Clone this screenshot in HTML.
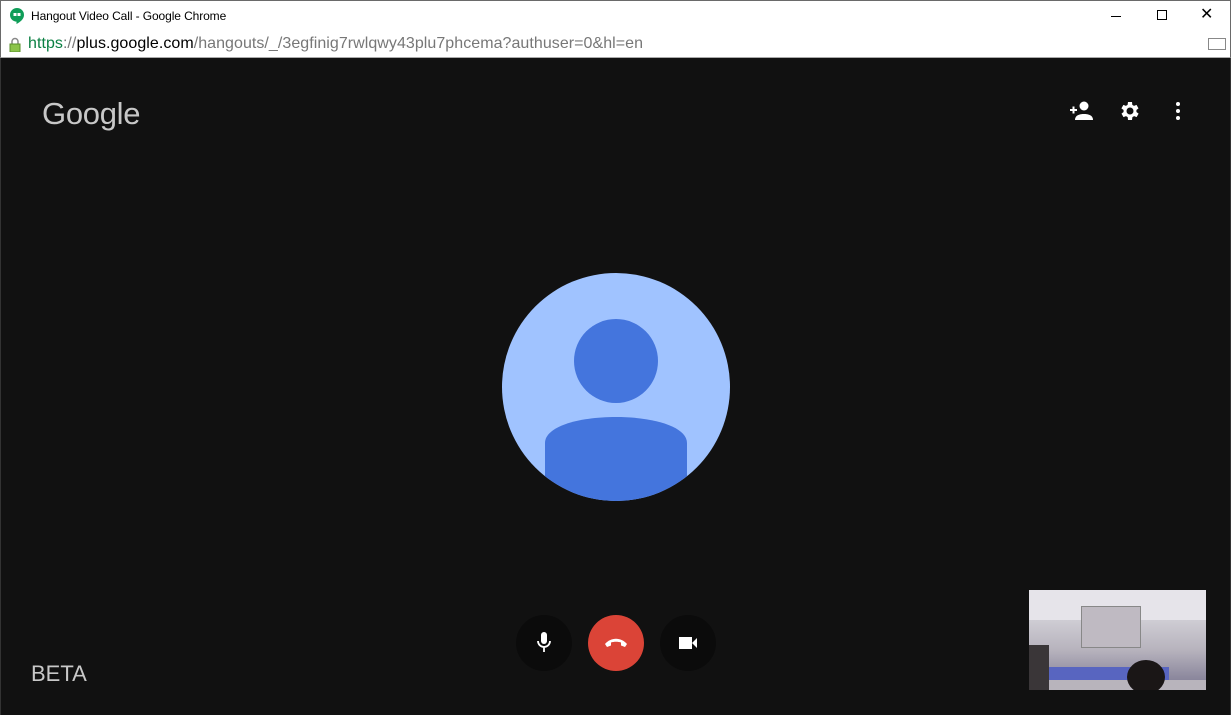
<!DOCTYPE html>
<html><head><meta charset="utf-8"><style>
*{margin:0;padding:0;box-sizing:border-box}
body{width:1231px;height:715px;overflow:hidden;background:#111;font-family:"Liberation Sans",sans-serif;position:relative}
.title{position:absolute;left:0;top:0;width:1231px;height:31px;background:#fff;border:1px solid #6a6a6a;border-bottom:none}
.url{position:absolute;left:0;top:31px;width:1231px;height:27px;background:#fff;border-left:1px solid #6a6a6a;border-right:1px solid #6a6a6a;border-bottom:1px solid #aaa}
.main{position:absolute;left:0;top:58px;width:1231px;height:657px;background:#111;border-left:1px solid #333;border-right:1px solid #333}
.btn{position:absolute;width:56px;height:56px;border-radius:50%;top:615px}
</style></head><body>
<div class="title">
<svg style="position:absolute;left:9px;top:7px" width="14" height="16" viewBox="0 0 14 16"><path d="M7 0a7 7 0 0 0-7 7c0 3.8 3 6.5 6.5 6.6V16c3.6-1.8 7.5-5 7.5-9A7 7 0 0 0 7 0z" fill="#0f9d58"/><rect x="3.5" y="5" width="3" height="3" fill="#fff"/><rect x="7.5" y="5" width="3" height="3" fill="#fff"/></svg>
<span style="position:absolute;left:30px;top:8px;font-size:12px;color:#000;letter-spacing:-0.1px">Hangout Video Call - Google Chrome</span>
<span style="position:absolute;left:1110px;width:10px;height:1px;background:#000;top:15px"></span>
<span style="position:absolute;left:1156px;top:9px;width:10px;height:10px;border:1px solid #000"></span>
<span style="position:absolute;left:1199px;top:3px;font-size:16px;color:#000">✕</span>
</div>
<div class="url">
<svg style="position:absolute;left:8px;top:6px" width="12" height="15" viewBox="0 0 12 15"><path d="M3 7V4.5a3 3 0 0 1 6 0V7" fill="none" stroke="#888" stroke-width="1.5"/><rect x="1" y="7" width="10" height="8" fill="#8bc34a" stroke="#5a8f2a"/></svg>
<span style="position:absolute;left:27px;top:4px;font-size:16px;color:#777;white-space:nowrap;letter-spacing:0.05px"><span style="color:#0b8043">https</span>://<span style="color:#000">plus.google.com</span>/hangouts/_/3egfinig7rwlqwy43plu7phcema?authuser=0&amp;hl=en</span>
<span style="position:absolute;left:1207px;top:7px;width:18px;height:12px;border:1px solid #888"></span>
</div>
<div class="main"></div>
<div style="position:absolute;left:42px;top:96px;font-size:31px;color:#c8c8c8;letter-spacing:-0.3px">Google</div>
<svg style="position:absolute;left:1069px;top:100px" width="26" height="22" viewBox="0 0 26 22"><path d="M1 10h7M4.5 6.5v7" stroke="#fff" stroke-width="2"/><circle cx="15" cy="6" r="4.5" fill="#fff"/><path d="M6 20c0-5 5-6 9-6s9 1 9 6z" fill="#fff"/></svg>
<svg style="position:absolute;left:1118px;top:99px" width="24" height="24" viewBox="0 0 24 24"><path fill="#fff" d="M19.4 13a7.5 7.5 0 0 0 0-2l2.1-1.6-2-3.5-2.5 1a7 7 0 0 0-1.7-1L15 3h-4l-.4 2.9a7 7 0 0 0-1.7 1l-2.5-1-2 3.5L6.6 11a7.5 7.5 0 0 0 0 2l-2.1 1.6 2 3.5 2.5-1a7 7 0 0 0 1.7 1L11 21h4l.4-2.9a7 7 0 0 0 1.7-1l2.5 1 2-3.5zM13 15.5A3.5 3.5 0 1 1 13 8.5a3.5 3.5 0 0 1 0 7z" transform="translate(-1 0)"/></svg>
<svg style="position:absolute;left:1172px;top:101px" width="12" height="20"><circle cx="6" cy="3" r="2" fill="#fff"/><circle cx="6" cy="10" r="2" fill="#fff"/><circle cx="6" cy="17" r="2" fill="#fff"/></svg>
<svg style="position:absolute;left:502px;top:273px" width="228" height="228" viewBox="0 0 228 228"><defs><clipPath id="c"><circle cx="114" cy="114" r="114"/></clipPath></defs><circle cx="114" cy="114" r="114" fill="#a0c3ff"/><g clip-path="url(#c)"><circle cx="114" cy="88" r="42" fill="#4475dd"/><path d="M43 228V170c0-16 32-26 71-26s71 10 71 26v58z" fill="#4475dd"/></g></svg>
<div class="btn" style="left:516px;background:#0b0b0b"><svg style="position:absolute;left:20px;top:16px" width="16" height="24" viewBox="0 0 16 24"><rect x="5" y="1" width="6" height="12" rx="3" fill="#fff"/><path d="M2 10a6 6 0 0 0 12 0M8 16v5" stroke="#fff" stroke-width="1.8" fill="none"/></svg></div>
<div class="btn" style="left:588px;background:#db4437"><svg style="position:absolute;left:16px;top:22px" width="24" height="12" viewBox="0 0 24 12"><path d="M1 7c6-7 16-7 22 0l-2 3-4-1.5V5.5c-3-1-7-1-10 0v3L3 10z" fill="#fff"/></svg></div>
<div class="btn" style="left:660px;background:#0b0b0b"><svg style="position:absolute;left:18px;top:20px" width="20" height="16" viewBox="0 0 20 16"><rect x="1" y="2" width="13" height="12" fill="#fff"/><path d="M14 8l5-5v10z" fill="#fff"/></svg></div>
<div style="position:absolute;left:31px;top:661px;font-size:22px;color:#c8c8c8">BETA</div>
<div style="position:absolute;left:1029px;top:590px;width:177px;height:100px;background:linear-gradient(#d8d6dc 0,#cfcdd4 30%,#b7b3bd 60%,#7a7690 100%);overflow:hidden">
<div style="position:absolute;left:0;top:0;width:177px;height:30px;background:#e6e4ea"></div>
<div style="position:absolute;left:52px;top:16px;width:60px;height:42px;background:#bfbac2;border:1px solid #888"></div>
<div style="position:absolute;left:20px;top:77px;width:120px;height:13px;background:#5865c0"></div>
<div style="position:absolute;left:20px;top:90px;width:157px;height:10px;background:#b8b4bc"></div>
<div style="position:absolute;left:98px;top:70px;width:38px;height:34px;border-radius:50%;background:#1a1616"></div>
<div style="position:absolute;left:0;top:55px;width:20px;height:45px;background:#3a3638"></div>
</div>
</body></html>
